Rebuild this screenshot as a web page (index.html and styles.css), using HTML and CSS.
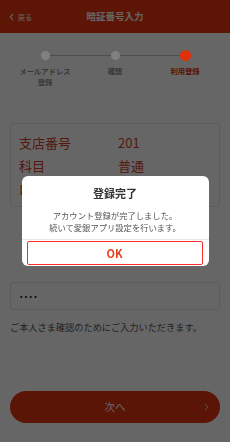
FILE: index.html
```html
<!DOCTYPE html>
<html lang="ja">
<head>
<meta charset="utf-8">
<title>暗証番号入力</title>
<link rel="stylesheet" href="styles.css">
</head>
<body>
<div class="app">
  <header class="topbar">
    <div class="back">
      <svg class="back-icon" viewBox="0 0 6 10" width="5" height="8"><path d="M5 1 L1.5 5 L5 9" fill="none" stroke="currentColor" stroke-width="1.4"/></svg>
      <span>戻る</span>
    </div>
    <h1 class="title">暗証番号入力</h1>
    <div class="spacer"></div>
  </header>

  <ol class="stepper">
    <li class="step"><span class="dot-wrap"><span class="dot"></span></span><span class="step-label">メールアドレス<br>登録</span></li>
    <li class="step"><span class="dot-wrap"><span class="dot"></span></span><span class="step-label">確認</span></li>
    <li class="step active"><span class="dot-wrap"><span class="dot"></span></span><span class="step-label">利用登録</span></li>
  </ol>

  <section class="card">
    <div class="row"><span class="key">支店番号</span><span class="val">201</span></div>
    <div class="row"><span class="key">科目</span><span class="val">普通</span></div>
    <div class="row"><span class="key">口座番号</span><span class="val">1234567</span></div>
  </section>

  <div class="pin">••••</div>
  <p class="note">ご本人さま確認のためにご入力いただきます。</p>

  <button class="next" type="button">
    <span>次へ</span>
    <svg class="next-icon" viewBox="0 0 6 10" width="5" height="8"><path d="M1 1 L4.5 5 L1 9" fill="none" stroke="currentColor" stroke-width="1.2"/></svg>
  </button>
</div>

<div class="overlay">
  <div class="dialog">
    <h2 class="dialog-title">登録完了</h2>
    <p class="dialog-msg">アカウント登録が完了しました。<br>続いて愛銀アプリ設定を行います。</p>
    <div class="dialog-actions">
      <button class="ok" type="button">OK</button>
    </div>
  </div>
</div>
</body>
</html>
```

FILE: styles.css
```css
* { box-sizing: border-box; }
html, body { margin: 0; padding: 0; }
body {
  width: 230px;
  height: 442px;
  background: #ffffff;
  font-family: "Noto Sans CJK JP", "Noto Sans", sans-serif;
  color: #333;
  overflow: hidden;
}
.app { display: flex; flex-direction: column; }

.topbar {
  height: 33px;
  background: #e8380d;
  color: #fff;
  display: grid;
  grid-template-columns: 1fr auto 1fr;
  align-items: center;
}
.back {
  display: flex;
  align-items: center;
  gap: 4px;
  padding-left: 9px;
  font-size: 7px;
}
.title {
  margin: 0;
  font-size: 9.5px;
  font-weight: 700;
  line-height: 1;
}

.stepper {
  list-style: none;
  margin: 0;
  padding: 17px 10px 0;
  display: grid;
  grid-template-columns: repeat(3, 1fr);
}
.step {
  position: relative;
  display: flex;
  flex-direction: column;
  align-items: center;
}
.step:not(:last-child)::after {
  content: "";
  position: absolute;
  top: 4.75px;
  left: 50%;
  width: 100%;
  height: 1.5px;
  background: #c4c4c4;
}
.dot-wrap {
  height: 11px;
  display: flex;
  align-items: center;
  justify-content: center;
  position: relative;
  z-index: 1;
}
.dot {
  width: 9px;
  height: 9px;
  border-radius: 50%;
  background: #808080;
}
.active .dot {
  width: 11px;
  height: 11px;
  background: #e0300a;
}
.step-label {
  margin-top: 4.5px;
  font-size: 7.3px;
  line-height: 11px;
  font-weight: 700;
  color: #8c8c8c;
  text-align: center;
}
.active .step-label { color: #e0300a; }

.card {
  margin: 35.5px 10px 0;
  border: 1px solid #e6e6e6;
  border-radius: 3px;
  padding: 7px 8px 6px;
}
.row {
  display: grid;
  grid-template-columns: 99px 1fr;
  font-size: 13px;
  line-height: 23px;
  color: #d2401e;
}

.pin {
  margin: 75px 10px 0;
  height: 28px;
  border: 1px solid #e6e6e6;
  border-radius: 3px;
  padding-left: 9px;
  display: flex;
  align-items: center;
  font-size: 7px;
  letter-spacing: 2.4px;
  color: #000;
}
.note {
  margin: 9.7px 10px 0;
  font-size: 9.2px;
  line-height: 14px;
  color: #555;
  white-space: nowrap;
}
.next {
  margin: 57px 10px 0;
  height: 32px;
  border: none;
  border-radius: 16px;
  background: #e4360f;
  color: #fff;
  font-family: inherit;
  font-size: 10.5px;
  display: flex;
  align-items: center;
  justify-content: center;
  position: relative;
}
.next-icon {
  position: absolute;
  right: 11px;
  top: 12px;
  color: #ddd;
}

.overlay {
  position: fixed;
  inset: 0;
  background: rgba(0, 0, 0, 0.6);
  display: flex;
  align-items: center;
  justify-content: center;
}
.dialog {
  width: 187px;
  height: 90px;
  background: #fff;
  border-radius: 6px;
  display: flex;
  flex-direction: column;
  align-items: stretch;
  overflow: hidden;
}
.dialog-title {
  margin: 10.7px 0 0;
  font-size: 11px;
  line-height: 12px;
  font-weight: 700;
  color: #333;
  text-align: center;
}
.dialog-msg {
  margin: 10.3px 0 0;
  font-size: 8.3px;
  line-height: 12px;
  color: #555;
  text-align: center;
}
.dialog-actions {
  margin-top: 6px;
  border-top: 1px solid #e8e8e8;
  padding: 1px 6px 0 5px;
  flex: 1;
  display: flex;
}
.ok {
  flex: 1;
  margin-bottom: 1px;
  border: 1.2px solid #ff2a2a;
  border-radius: 2px;
  background: #fff;
  color: #e8401c;
  font-family: inherit;
  font-size: 11px;
  font-weight: 700;
  padding: 0;
}
```
